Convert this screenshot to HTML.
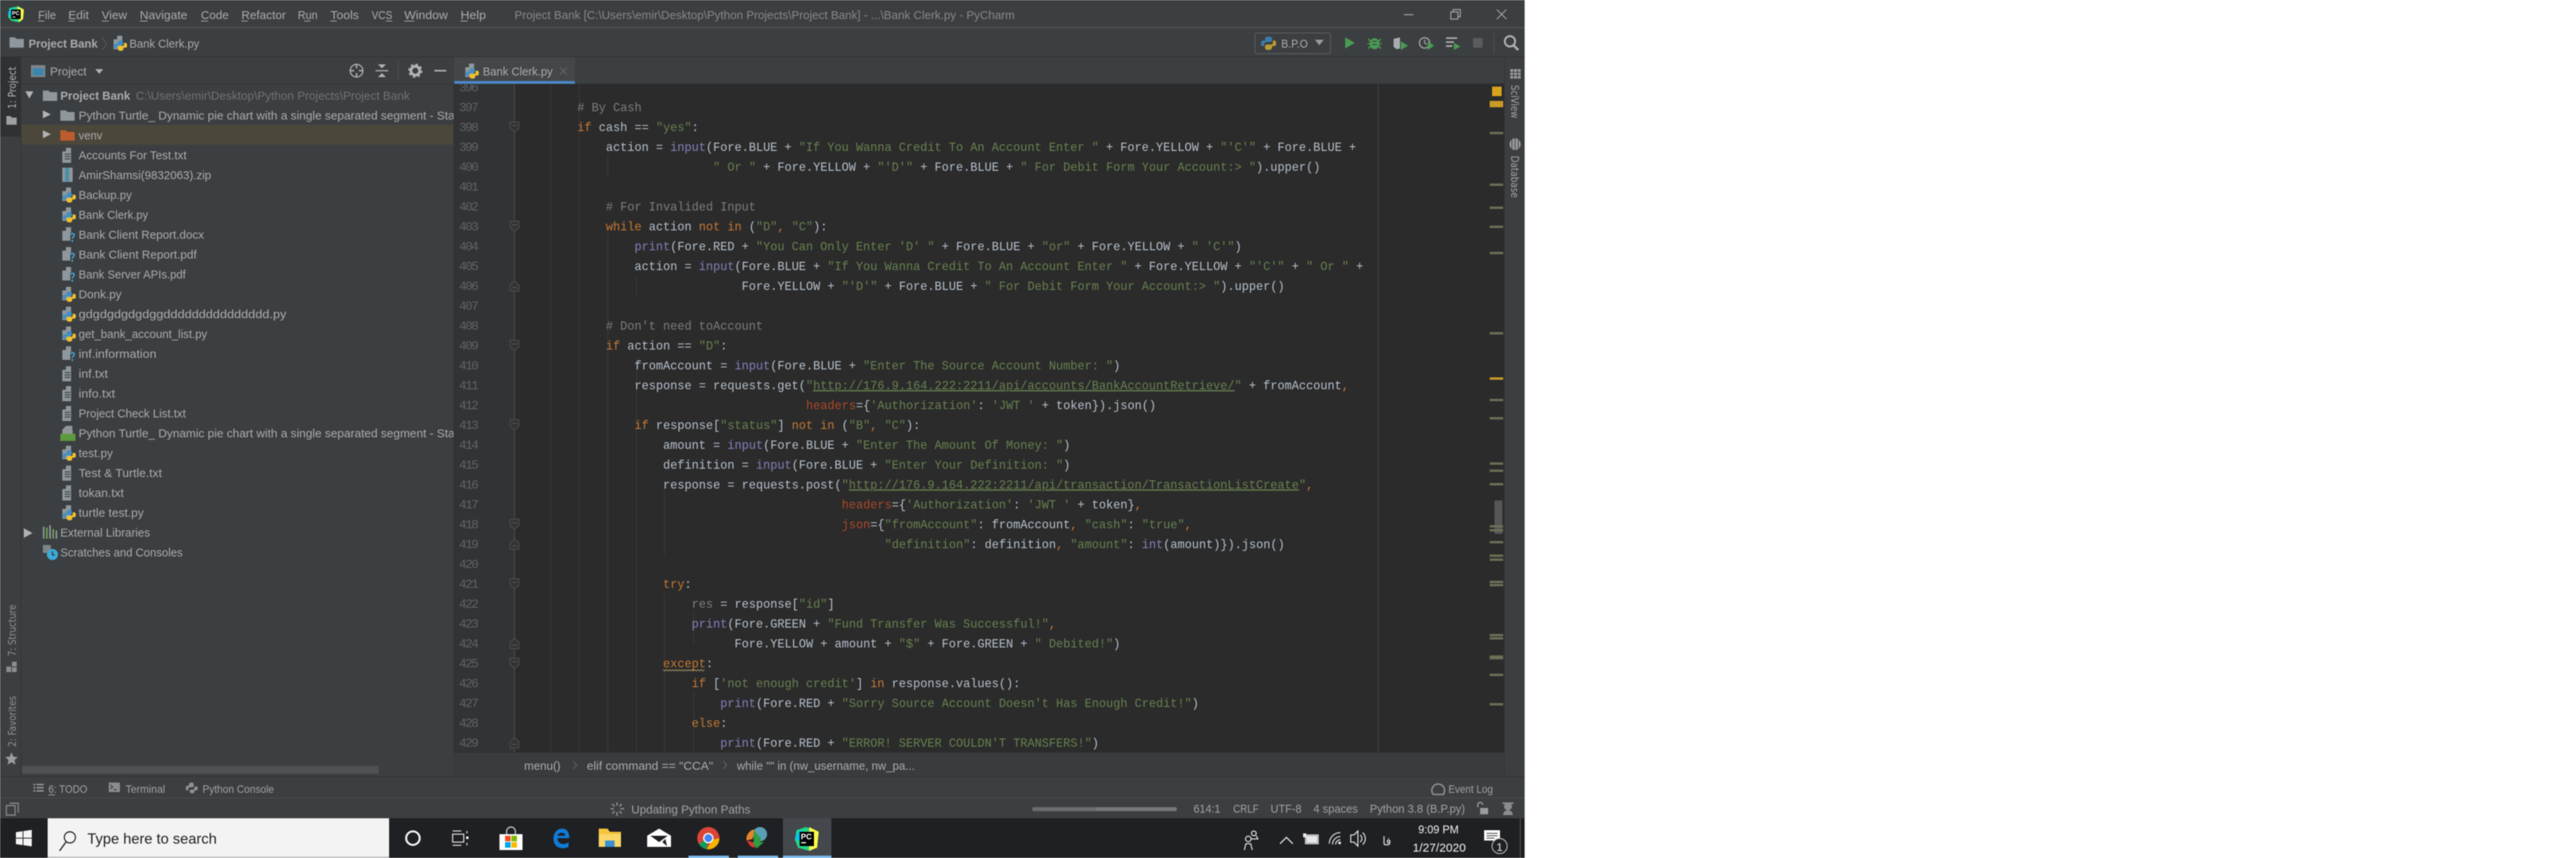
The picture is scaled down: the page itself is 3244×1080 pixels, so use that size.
<!DOCTYPE html>
<html><head><meta charset="utf-8"><title>PyCharm</title>
<style>
html,body{margin:0;padding:0;background:#fff;width:3244px;height:1080px;overflow:hidden}
svg{display:block;filter:blur(.4px)}
text{font-family:"Liberation Sans","Noto Sans CJK SC",sans-serif}
.ui{font-size:15px;fill:#a9abad}
.sm{font-size:14px;fill:#9ea1a3}
.code text,.num text{font-family:"Liberation Mono",monospace;font-size:16px;white-space:pre}
.code{fill:#b4bfcb}.num{fill:#606366}
.k{fill:#c47733}.s{fill:#66804f}.b{fill:#8080bb}.c{fill:#7c7c7c}.h{fill:#aa4926}.u{text-decoration:underline}
</style></head><body>
<svg xmlns="http://www.w3.org/2000/svg" width="3244" height="1080" viewBox="0 0 3244 1080">
<defs>
<clipPath id="tree"><rect x="26" y="105" width="545" height="842"/></clipPath>
<g id="file"><path d="M5 0h6v19H0V5z" fill="#8f979c"/><path d="M0 4.500L4.500 0v4.500z" fill="#3c3f41"/></g>
<g id="py"><path d="M5 0h6v17H0V5z" fill="#8f979c"/><path d="M0 4.500L4.500 0v4.500z" fill="#3c3f41"/>
<path d="M9 6C6.500 6 5.500 7 5.500 8.500V10H2.500C1 10 .5 11.500 .5 13s.5 3 2 3H4v-2c0-1.500 1-2 2-2h4c1 0 2-1 2-2V8.500C12 7 11 6 9 6z" fill="#3f8fc4"/>
<path d="M13 9v2c0 1.500-1 2-2 2H7c-1 0-1.500 1-1.500 2v1.500C5.500 18 7 19 9 19s3.500-1 3.500-2.500V15h3c1 0 1.500-1 1.500-3s-.5-3-2-3z" fill="#efc12d"/></g>
<g id="txt"><use href="#file" /><path d="M3 8h7M3 11h7M3 14h7" stroke="#3c3f41" stroke-width="1.300"/></g>
<g id="unk"><path d="M5 0h6v17H0V5z" fill="#8f979c"/><path d="M0 4.500L4.500 0v4.500z" fill="#3c3f41"/><rect x="10" y="7" width="7" height="12" fill="#3c3f41"/><path d="M10.500 9.500c1-2 4.500-2 4.500.5 0 2-2.500 2-2.500 4.500" fill="none" stroke="#40a0d0" stroke-width="1.800"/><rect x="11.500" y="16" width="2" height="2.500" fill="#40a0d0"/></g>
<g id="fold"><path d="M0 0h7l2 2h9v11H0z" fill="#8f979c"/></g>
<g id="fd"><path d="M-5.500-6.500h11v8l-5.500 5-5.500-5z" fill="#313335" stroke="#4a4d4f" stroke-width="1.200"/><path d="M-3-2h6" stroke="#5a5d5f"/></g>
<g id="fu"><path d="M-5.500 6.500h11v-8l-5.500-5-5.500 5z" fill="#313335" stroke="#4a4d4f" stroke-width="1.200"/><path d="M-3 2h6" stroke="#5a5d5f"/></g>
</defs>

<rect x="0" y="0" width="1920" height="1030" fill="#3c3f41"/>

<!-- editor -->
<rect x="571" y="105" width="77" height="842" fill="#313335"/>
<rect x="648" y="105" width="1246" height="842" fill="#2b2b2b"/>
<path d="M648 105V947" stroke="#4d5052" stroke-width="1"/>
<path d="M1735.500 105V947" stroke="#444648"/>
<g stroke="#3a3b3c" stroke-width="1">
<path d="M693.500 105V947M729.500 105V947M765.500 195V222M765.500 293V947M801.500 348V372M801.500 450V947M836.500 610V700M836.500 747V947M873.500 770V810M873.500 870V947"/>
</g>
<g class="num">
<text x="578" y="115" textLength="25">396</text><text x="578" y="140" textLength="25">397</text><text x="578" y="165" textLength="25">398</text><text x="578" y="190" textLength="25">399</text><text x="578" y="215" textLength="25">400</text><text x="578" y="240" textLength="25">401</text><text x="578" y="265" textLength="25">402</text><text x="578" y="290" textLength="25">403</text><text x="578" y="315" textLength="25">404</text><text x="578" y="340" textLength="25">405</text><text x="578" y="365" textLength="25">406</text><text x="578" y="390" textLength="25">407</text><text x="578" y="415" textLength="25">408</text><text x="578" y="440" textLength="25">409</text><text x="578" y="465" textLength="25">410</text><text x="578" y="490" textLength="25">411</text><text x="578" y="515" textLength="25">412</text><text x="578" y="540" textLength="25">413</text><text x="578" y="565" textLength="25">414</text><text x="578" y="590" textLength="25">415</text><text x="578" y="615" textLength="25">416</text><text x="578" y="640" textLength="25">417</text><text x="578" y="665" textLength="25">418</text><text x="578" y="690" textLength="25">419</text><text x="578" y="715" textLength="25">420</text><text x="578" y="740" textLength="25">421</text><text x="578" y="765" textLength="25">422</text><text x="578" y="790" textLength="25">423</text><text x="578" y="815" textLength="25">424</text><text x="578" y="840" textLength="25">425</text><text x="578" y="865" textLength="25">426</text><text x="578" y="890" textLength="25">427</text><text x="578" y="915" textLength="25">428</text><text x="578" y="940" textLength="25">429</text>
</g>
<use href="#fd" x="648" y="160"/><use href="#fd" x="648" y="285"/><use href="#fu" x="648" y="360"/><use href="#fd" x="648" y="435"/><use href="#fd" x="648" y="535"/><use href="#fd" x="648" y="660"/><use href="#fu" x="648" y="685"/><use href="#fd" x="648" y="735"/><use href="#fu" x="648" y="810"/><use href="#fd" x="648" y="835"/><use href="#fu" x="648" y="935"/>

<g class="code" transform="translate(655 0) scale(.9375 1)">
<text x="76.800" y="140" class="c"># By Cash</text>
<text x="76.800" y="165"><tspan class="k">if</tspan> cash == <tspan class="s">"yes"</tspan>:</text>
<text x="115.200" y="190">action = <tspan class="b">input</tspan>(Fore.BLUE + <tspan class="s">"If You Wanna Credit To An Account Enter "</tspan> + Fore.YELLOW + <tspan class="s">"'C'"</tspan> + Fore.BLUE +</text>
<text x="259.200" y="215"><tspan class="s">" Or "</tspan> + Fore.YELLOW + <tspan class="s">"'D'"</tspan> + Fore.BLUE + <tspan class="s">" For Debit Form Your Account:&gt; "</tspan>).upper()</text>
<text x="115.200" y="265" class="c"># For Invalided Input</text>
<text x="115.200" y="290"><tspan class="k">while</tspan> action <tspan class="k">not in</tspan> (<tspan class="s">"D"</tspan><tspan class="k">,</tspan> <tspan class="s">"C"</tspan>):</text>
<text x="153.600" y="315"><tspan class="b">print</tspan>(Fore.RED + <tspan class="s">"You Can Only Enter 'D' "</tspan> + Fore.BLUE + <tspan class="s">"or"</tspan> + Fore.YELLOW + <tspan class="s">" 'C'"</tspan>)</text>
<text x="153.600" y="340">action = <tspan class="b">input</tspan>(Fore.BLUE + <tspan class="s">"If You Wanna Credit To An Account Enter "</tspan> + Fore.YELLOW + <tspan class="s">"'C'"</tspan> + <tspan class="s">" Or "</tspan> +</text>
<text x="297.600" y="365">Fore.YELLOW + <tspan class="s">"'D'"</tspan> + Fore.BLUE + <tspan class="s">" For Debit Form Your Account:&gt; "</tspan>).upper()</text>
<text x="115.200" y="415" class="c"># Don't need toAccount</text>
<text x="115.200" y="440"><tspan class="k">if</tspan> action == <tspan class="s">"D"</tspan>:</text>
<text x="153.600" y="465">fromAccount = <tspan class="b">input</tspan>(Fore.BLUE + <tspan class="s">"Enter The Source Account Number: "</tspan>)</text>
<text x="153.600" y="490">response = requests.get(<tspan class="s">"</tspan><tspan class="s u">http://176.9.164.222:2211/api/accounts/BankAccountRetrieve/</tspan><tspan class="s">"</tspan> + fromAccount<tspan class="k">,</tspan></text>
<text x="384" y="515"><tspan class="h">headers</tspan>={<tspan class="s">'Authorization'</tspan>: <tspan class="s">'JWT '</tspan> + token}).json()</text>
<text x="153.600" y="540"><tspan class="k">if</tspan> response[<tspan class="s">"status"</tspan>] <tspan class="k">not in</tspan> (<tspan class="s">"B"</tspan><tspan class="k">,</tspan> <tspan class="s">"C"</tspan>):</text>
<text x="192" y="565">amount = <tspan class="b">input</tspan>(Fore.BLUE + <tspan class="s">"Enter The Amount Of Money: "</tspan>)</text>
<text x="192" y="590">definition = <tspan class="b">input</tspan>(Fore.BLUE + <tspan class="s">"Enter Your Definition: "</tspan>)</text>
<text x="192" y="615">response = requests.post(<tspan class="s">"</tspan><tspan class="s u">http://176.9.164.222:2211/api/transaction/TransactionListCreate</tspan><tspan class="s">"</tspan><tspan class="k">,</tspan></text>
<text x="432" y="640"><tspan class="h">headers</tspan>={<tspan class="s">'Authorization'</tspan>: <tspan class="s">'JWT '</tspan> + token}<tspan class="k">,</tspan></text>
<text x="432" y="665"><tspan class="h">json</tspan>={<tspan class="s">"fromAccount"</tspan>: fromAccount<tspan class="k">,</tspan> <tspan class="s">"cash"</tspan>: <tspan class="s">"true"</tspan><tspan class="k">,</tspan></text>
<text x="489.600" y="690"><tspan class="s">"definition"</tspan>: definition<tspan class="k">,</tspan> <tspan class="s">"amount"</tspan>: <tspan class="b">int</tspan>(amount)}).json()</text>
<text x="192" y="740"><tspan class="k">try</tspan>:</text>
<text x="230.400" y="765"><tspan class="c">res</tspan> = response[<tspan class="s">"id"</tspan>]</text>
<text x="230.400" y="790"><tspan class="b">print</tspan>(Fore.GREEN + <tspan class="s">"Fund Transfer Was Successful!"</tspan><tspan class="k">,</tspan></text>
<text x="288" y="815">Fore.YELLOW + amount + <tspan class="s">"$"</tspan> + Fore.GREEN + <tspan class="s">" Debited!"</tspan>)</text>
<text x="192" y="840"><tspan class="k">except</tspan>:</text>
<text x="230.400" y="865"><tspan class="k">if</tspan> [<tspan class="s">'not enough credit'</tspan>] <tspan class="k">in</tspan> response.values():</text>
<text x="268.800" y="890"><tspan class="b">print</tspan>(Fore.RED + <tspan class="s">"Sorry Source Account Doesn't Has Enough Credit!"</tspan>)</text>
<text x="230.400" y="915"><tspan class="k">else</tspan>:</text>
<text x="268.800" y="940"><tspan class="b">print</tspan>(Fore.RED + <tspan class="s">"ERROR! SERVER COULDN'T TRANSFERS!"</tspan>)</text>
</g>
<path d="M835 843l2 1.500 2-1.500 2 1.500 2-1.500 2 1.500 2-1.500 2 1.500 2-1.500 2 1.500 2-1.500 2 1.500 2-1.500 2 1.500 2-1.500 2 1.500 2-1.500 2 1.500 2-1.500 2 1.500 2-1.500 2 1.500 2-1.500 2 1.500 2-1.500 2 1.500 2-1.500" fill="none" stroke="#a89a62" stroke-width="1"/>

<!-- error stripe -->
<g fill="#6b6f55">
<rect x="1879" y="109" width="12" height="12" fill="#d9a31c"/><rect x="1876" y="127" width="17" height="8" fill="#c99a26"/>
<rect x="1876" y="166" width="17" height="3"/><rect x="1876" y="231" width="17" height="3"/><rect x="1876" y="260" width="17" height="3"/><rect x="1876" y="284" width="17" height="3"/><rect x="1876" y="317" width="17" height="3"/><rect x="1876" y="418" width="17" height="3"/><rect x="1876" y="475" width="17" height="3" fill="#c99a26"/><rect x="1876" y="502" width="17" height="3"/><rect x="1876" y="525" width="17" height="3"/><rect x="1876" y="582" width="17" height="3"/><rect x="1876" y="591" width="17" height="3"/><rect x="1876" y="608" width="17" height="3"/>
<rect x="1882" y="630" width="10" height="42" fill="#555657"/>
<rect x="1876" y="661" width="17" height="3"/><rect x="1876" y="666" width="17" height="3"/><rect x="1876" y="681" width="17" height="3"/><rect x="1876" y="698" width="17" height="3"/><rect x="1876" y="703" width="17" height="3"/><rect x="1876" y="731" width="17" height="3"/><rect x="1876" y="735" width="17" height="3"/><rect x="1876" y="798" width="17" height="3"/><rect x="1876" y="802" width="17" height="3"/><rect x="1876" y="825" width="17" height="5"/><rect x="1876" y="848" width="17" height="3"/><rect x="1876" y="885" width="17" height="3"/>
</g>

<!-- top bars -->
<rect x="0" y="0" width="1920" height="105" fill="#3c3f41"/>
<rect x="0" y="34" width="1920" height="1.500" fill="#505355"/>
<rect x="0" y="71" width="1920" height="1" fill="#323436"/>
<rect x="0" y="105" width="1894" height="1" fill="#323436"/>
<rect x="1894" y="71" width="1" height="906" fill="#323436"/>
<rect x="1895" y="105" width="25" height="872" fill="#3c3f41"/>

<!-- logo -->
<g transform="translate(10 8)"><path d="M2 2L13 0l7 4-1 12-5 4-10-2-4-5z" fill="#21d789"/><path d="M12 0l8 4-1 12-5 4z" fill="#fcf84a"/><path d="M0 8l5-6 5 6-5 7z" fill="#07c3f2"/><rect x="4" y="4" width="12" height="12" fill="#000"/><text x="5" y="11" font-size="7" font-weight="bold" fill="#fff" style="font-size:7px">PC</text><rect x="5.500" y="13" width="4" height="1" fill="#fff"/></g>

<!-- menu -->
<g>
<text class="ui" x="48" y="24" textLength="22.500" lengthAdjust="spacingAndGlyphs">File</text>
<text class="ui" x="86" y="24" textLength="26" lengthAdjust="spacingAndGlyphs">Edit</text>
<text class="ui" x="128" y="24" textLength="32" lengthAdjust="spacingAndGlyphs">View</text>
<text class="ui" x="176" y="24" textLength="60" lengthAdjust="spacingAndGlyphs">Navigate</text>
<text class="ui" x="253" y="24" textLength="35" lengthAdjust="spacingAndGlyphs">Code</text>
<text class="ui" x="304" y="24" textLength="56" lengthAdjust="spacingAndGlyphs">Refactor</text>
<text class="ui" x="375" y="24" textLength="25" lengthAdjust="spacingAndGlyphs">Run</text>
<text class="ui" x="416" y="24" textLength="36" lengthAdjust="spacingAndGlyphs">Tools</text>
<text class="ui" x="468" y="24" textLength="26" lengthAdjust="spacingAndGlyphs">VCS</text>
<text class="ui" x="509" y="24" textLength="55" lengthAdjust="spacingAndGlyphs">Window</text>
<text class="ui" x="580" y="24" textLength="32" lengthAdjust="spacingAndGlyphs">Help</text>
</g>
<g fill="#a9abad"><rect x="48" y="26" width="8" height="1"/><rect x="86" y="26" width="8" height="1"/><rect x="128" y="26" width="9" height="1"/><rect x="176" y="26" width="10" height="1"/><rect x="253" y="26" width="9" height="1"/><rect x="304" y="26" width="8" height="1"/><rect x="383" y="26" width="8" height="1"/><rect x="416" y="26" width="8" height="1"/><rect x="486" y="26" width="8" height="1"/><rect x="509" y="26" width="13" height="1"/><rect x="580" y="26" width="9" height="1"/></g>
<text class="ui" style="fill:#85888a" x="648" y="24" textLength="630" lengthAdjust="spacingAndGlyphs">Project Bank [C:\Users\emir\Desktop\Python Projects\Project Bank] - ...\Bank Clerk.py - PyCharm</text>

<!-- window controls -->
<g fill="none" stroke="#a9adb0" stroke-width="1.200">
<path d="M1768 18.500h12"/>
<path d="M1827 15h9v9h-9zM1830 15v-3h9v9h-3"/>
<path d="M1885 12l12 12M1897 12l-12 12"/>
</g>

<!-- nav bar -->
<use href="#fold" x="12" y="47"/>
<text class="ui" x="36" y="60" style="font-weight:bold" textLength="87" lengthAdjust="spacingAndGlyphs">Project Bank</text>
<path d="M129 47l5 8-5 8" fill="none" stroke="#5c5f61" stroke-width="1"/>
<use href="#py" x="143" y="45"/>
<text class="ui" x="163" y="60" textLength="88" lengthAdjust="spacingAndGlyphs">Bank Clerk.py</text>

<!-- run config -->
<rect x="1580.500" y="41.500" width="95" height="26" rx="2" fill="#3c3f41" stroke="#5e6163"/>
<path d="M1598 46c-4 0-5 1.500-5 3v2h-3c-1.500 0-2 2-2 4s1 3 2 3h2v-2c0-2 1-3 3-3h4c2 0 3-1 3-3v-1c0-2-2-3-4-3z" fill="#3d7aa5"/>
<path d="M1603 51v2c0 2-1 3-3 3h-4c-2 0-3 1-3 3v1c0 2 2 3 4 3s5-1 5-3v-2h3c2 0 2-2 2-4s-1-3-2-3z" fill="#b89a33"/>
<text class="ui" x="1613.500" y="60" textLength="33.500" lengthAdjust="spacingAndGlyphs">B.P.O</text>
<path d="M1656 50h11l-5.500 7z" fill="#9a9d9f"/>
<path d="M1694 47l12 7-12 7z" fill="#499c54"/>
<g fill="#499c54"><ellipse cx="1731" cy="55" rx="6" ry="7"/><path d="M1723 49l3 3M1739 49l-3 3M1722 55h4M1740 55h-4M1723 61l3-3M1739 61l-3-3" stroke="#499c54" stroke-width="1.600"/></g>
<path d="M1728 52h6M1728 56h6" stroke="#3c3f41" stroke-width="1.200"/>
<path d="M1755 49l8-2v14l-4 1-4-3z" fill="#a9adb0"/><path d="M1764 52l9 5.500-9 5.500z" fill="#499c54"/>
<circle cx="1794" cy="54" r="6.500" fill="none" stroke="#a9adb0" stroke-width="1.400"/><path d="M1794 50v4l3 2" fill="none" stroke="#a9adb0" stroke-width="1.200"/><path d="M1798 52l8 5.500-8 5.500z" fill="#499c54"/>
<path d="M1821 48h14M1821 53h10M1821 58h8" stroke="#a9adb0" stroke-width="2"/><path d="M1831 54l8 4.500-8 4.500z" fill="#499c54"/>
<rect x="1855" y="48" width="12" height="12" fill="#5a5d5f"/>
<path d="M1881.500 42v25" stroke="#4f5254"/>
<circle cx="1901.500" cy="52" r="6.500" fill="none" stroke="#afb1b3" stroke-width="2.400"/><path d="M1906 57l6 6" stroke="#afb1b3" stroke-width="3"/>

<!-- left strip -->
<rect x="0" y="72" width="26" height="100" fill="#2f3133"/>
<rect x="26" y="72" width="1" height="905" fill="#323436"/>
<text class="ui" style="font-size:13px;fill:#b3b5b7;font-family:'DejaVu Sans','Liberation Sans',sans-serif" transform="translate(20 137) rotate(-90)" textLength="53" lengthAdjust="spacingAndGlyphs">1: Project</text>
<path d="M8 146h5l2 2h6v9H8z" fill="#9aa0a4"/>
<text class="ui" style="font-size:13px;fill:#8f9294;font-family:'DejaVu Sans','Liberation Sans',sans-serif" transform="translate(20 826) rotate(-90)" textLength="65" lengthAdjust="spacingAndGlyphs">7: Structure</text>
<g fill="#8a8d8f"><rect x="8" y="839" width="6" height="7"/><rect x="15" y="833" width="6" height="6"/><rect x="15" y="840" width="6" height="6"/></g>
<text class="ui" style="font-size:13px;fill:#8f9294;font-family:'DejaVu Sans','Liberation Sans',sans-serif" transform="translate(20 940) rotate(-90)" textLength="64" lengthAdjust="spacingAndGlyphs">2: Favorites</text>
<path d="M14.500 947l2.400 5.500 5.600.5-4.300 3.800 1.300 5.700-5-3-5 3 1.300-5.700-4.300-3.800 5.600-.5z" fill="#9a9d9f"/>

<!-- right strip -->
<g fill="#9a9d9f"><rect x="1902" y="87" width="13" height="12"/></g><path d="M1902 91h13M1902 95h13M1906 87v12M1911 87v12" stroke="#3c3f41"/>
<text class="ui" style="font-size:13px;fill:#a4a7a9;font-family:'DejaVu Sans','Liberation Sans',sans-serif" transform="translate(1903 107) rotate(90)" textLength="42" lengthAdjust="spacingAndGlyphs">SciView</text>
<ellipse cx="1908" cy="181.500" rx="7" ry="7.500" fill="#9a9d9f"/><path d="M1904 175v13M1908 174v15M1912 175v13" stroke="#3c3f41"/>
<text class="ui" style="font-size:13px;fill:#a4a7a9;font-family:'DejaVu Sans','Liberation Sans',sans-serif" transform="translate(1903 196) rotate(90)" textLength="53" lengthAdjust="spacingAndGlyphs">Database</text>

<!-- project header -->
<rect x="39" y="82" width="18" height="15" fill="#7d8488"/><rect x="41" y="86" width="14" height="9" fill="#3d86ad"/>
<text class="ui" x="63" y="95" textLength="46" lengthAdjust="spacingAndGlyphs">Project</text>
<path d="M120 87h10l-5 6z" fill="#afb1b3"/>
<circle cx="449" cy="89" r="8" fill="none" stroke="#afb1b3" stroke-width="1.500"/><path d="M449 81v5M449 92v5M441 89h5M452 89h5" stroke="#afb1b3" stroke-width="1.800"/>
<path d="M473 89h16" stroke="#afb1b3" stroke-width="1.500"/><path d="M481 86l-5-5h10zM481 92l-5 5h10z" fill="#afb1b3"/>
<path d="M501.500 77v24" stroke="#4f5254"/>
<circle cx="523" cy="89" r="5.500" fill="none" stroke="#afb1b3" stroke-width="3.500"/><circle cx="523" cy="89" r="8" fill="none" stroke="#afb1b3" stroke-width="2" stroke-dasharray="3 3.300"/>
<path d="M547 89h15" stroke="#afb1b3" stroke-width="2"/>

<!-- tab -->
<rect x="572" y="72" width="152" height="33" fill="#44474a"/>
<rect x="572" y="102" width="152" height="3.500" fill="#4a88c7"/>
<use href="#py" x="586" y="80"/>
<text class="ui" x="608" y="95" textLength="88" lengthAdjust="spacingAndGlyphs">Bank Clerk.py</text>
<path d="M705 85l9 9M714 85l-9 9" stroke="#66696b" stroke-width="1.200"/>

<!-- tree -->
<rect x="27" y="157" width="544" height="25" fill="#4b473a"/>
<g clip-path="url(#tree)">
<path d="M32 115h10l-5 9z" fill="#b0b3b5"/><use href="#fold" x="54" y="114"/>
<text class="ui" x="76" y="125.700" style="font-weight:bold" textLength="88" lengthAdjust="spacingAndGlyphs">Project Bank</text>
<text class="ui" style="fill:#6f7274" x="171" y="125.700" textLength="345" lengthAdjust="spacingAndGlyphs">C:\Users\emir\Desktop\Python Projects\Project Bank</text>
<path d="M54 139l10 5-10 5z" fill="#b0b3b5"/><use href="#fold" x="76" y="139"/>
<text class="ui" x="99" y="150.700" textLength="481" lengthAdjust="spacingAndGlyphs">Python Turtle_ Dynamic pie chart with a single separated segment - Stac</text>
<path d="M54 164l10 5-10 5z" fill="#b0b3b5"/><path d="M76 164h7l2 2h9v11H76z" fill="#bd5c2d"/>
<text class="ui" x="99" y="175.700" textLength="30" lengthAdjust="spacingAndGlyphs">venv</text>
<use href="#txt" x="78.500" y="186"/><text class="ui" x="99" y="200.700" textLength="136" lengthAdjust="spacingAndGlyphs">Accounts For Test.txt</text>
<rect x="78.500" y="211" width="13" height="18" fill="#8f979c"/><rect x="82" y="211" width="5" height="18" fill="#4b8fa8"/>
<text class="ui" x="99" y="225.700" textLength="167" lengthAdjust="spacingAndGlyphs">AmirShamsi(9832063).zip</text>
<use href="#py" x="78.500" y="236"/><text class="ui" x="99" y="250.700" textLength="67" lengthAdjust="spacingAndGlyphs">Backup.py</text>
<use href="#py" x="78.500" y="261"/><text class="ui" x="99" y="275.700" textLength="87.500" lengthAdjust="spacingAndGlyphs">Bank Clerk.py</text>
<use href="#unk" x="78.500" y="286"/><text class="ui" x="99" y="300.700" textLength="158" lengthAdjust="spacingAndGlyphs">Bank Client Report.docx</text>
<use href="#unk" x="78.500" y="311"/><text class="ui" x="99" y="325.700" textLength="148.700" lengthAdjust="spacingAndGlyphs">Bank Client Report.pdf</text>
<use href="#unk" x="78.500" y="336"/><text class="ui" x="99" y="350.700" textLength="135" lengthAdjust="spacingAndGlyphs">Bank Server APIs.pdf</text>
<use href="#py" x="78.500" y="361"/><text class="ui" x="99" y="375.700" textLength="54" lengthAdjust="spacingAndGlyphs">Donk.py</text>
<use href="#py" x="78.500" y="386"/><text class="ui" x="99" y="400.700" textLength="261.600" lengthAdjust="spacingAndGlyphs">gdgdgdgdgdggddddddddddddddd.py</text>
<use href="#py" x="78.500" y="411"/><text class="ui" x="99" y="425.700" textLength="162" lengthAdjust="spacingAndGlyphs">get_bank_account_list.py</text>
<use href="#unk" x="78.500" y="436"/><text class="ui" x="99" y="450.700" textLength="98" lengthAdjust="spacingAndGlyphs">inf.information</text>
<use href="#txt" x="78.500" y="461"/><text class="ui" x="99" y="475.700" textLength="37" lengthAdjust="spacingAndGlyphs">inf.txt</text>
<use href="#txt" x="78.500" y="486"/><text class="ui" x="99" y="500.700" textLength="46" lengthAdjust="spacingAndGlyphs">info.txt</text>
<use href="#txt" x="78.500" y="511"/><text class="ui" x="99" y="525.700" textLength="135" lengthAdjust="spacingAndGlyphs">Project Check List.txt</text>
<path d="M83 536h8v19H83z" fill="#8f979c"/><path d="M78.500 541l4.500-5v5z" fill="#8f979c"/><rect x="78.500" y="541" width="13" height="9" fill="#8f979c"/><rect x="76" y="546" width="19" height="9" fill="#5e9a3f"/>
<text class="ui" x="99" y="550.700" textLength="481" lengthAdjust="spacingAndGlyphs">Python Turtle_ Dynamic pie chart with a single separated segment - Stac</text>
<use href="#py" x="78.500" y="561"/><text class="ui" x="99" y="575.700" textLength="43" lengthAdjust="spacingAndGlyphs">test.py</text>
<use href="#txt" x="78.500" y="586"/><text class="ui" x="99" y="600.700" textLength="105" lengthAdjust="spacingAndGlyphs">Test &amp; Turtle.txt</text>
<use href="#txt" x="78.500" y="611"/><text class="ui" x="99" y="625.700" textLength="57" lengthAdjust="spacingAndGlyphs">tokan.txt</text>
<use href="#py" x="78.500" y="636"/><text class="ui" x="99" y="650.700" textLength="82" lengthAdjust="spacingAndGlyphs">turtle test.py</text>
<path d="M30 665l11 6-11 6z" fill="#b0b3b5"/>
<g stroke-width="2"><path d="M55 663v15" stroke="#8f979c"/><path d="M59 664v14" stroke="#6fa64b"/><path d="M63 661v17" stroke="#8f979c"/><path d="M67 666v12" stroke="#6fa64b"/><path d="M71 668v10" stroke="#8f979c"/></g>
<text class="ui" x="76" y="675.700" textLength="113" lengthAdjust="spacingAndGlyphs">External Libraries</text>
<path d="M54 686h10v10H54z" fill="#7d8488"/><circle cx="66" cy="698" r="7" fill="#3fa9d6"/><path d="M66 694v4.500h3" fill="none" stroke="#1f2a30" stroke-width="1.200"/>
<text class="ui" x="76" y="700.700" textLength="154" lengthAdjust="spacingAndGlyphs">Scratches and Consoles</text>
</g>
<rect x="28" y="964" width="449" height="10" fill="#4f5153"/>

<!-- breadcrumb -->
<rect x="571" y="947" width="1323" height="30" fill="#393b3d"/>
<rect x="571" y="947" width="1323" height="1" fill="#323436"/>
<g><text class="ui" x="660" y="969" textLength="46" lengthAdjust="spacingAndGlyphs">menu()</text>
<path d="M722 958l4 5-4 5M911 958l4 5-4 5" fill="none" stroke="#6b6e70"/>
<text class="ui" x="739" y="969" textLength="159" lengthAdjust="spacingAndGlyphs">elif command == "CCA"</text>
<text class="ui" x="928" y="969" textLength="224" lengthAdjust="spacingAndGlyphs">while "" in (nw_username, nw_pa...</text></g>

<!-- tool bar -->
<rect x="0" y="977" width="1920" height="1" fill="#323436"/>
<rect x="0" y="1004" width="1920" height="1" fill="#4a4d4f"/>
<path d="M46 987.500h9M46 991.500h9M46 995.500h9" stroke="#8f9294" stroke-width="2"/><path d="M42 987.500h2.500M42 991.500h2.500M42 995.500h2.500" stroke="#8f9294" stroke-width="2"/>
<text class="sm" x="61" y="998" textLength="49" lengthAdjust="spacingAndGlyphs">6: TODO</text><rect x="61" y="1000" width="8" height="1" fill="#a4a7a9"/>
<rect x="137" y="985" width="14" height="12" fill="#8a8d8f"/><path d="M139 988l3 2.500-3 2.500M143 994h4" fill="none" stroke="#3c3f41" stroke-width="1.200"/>
<text class="sm" x="158" y="998" textLength="50" lengthAdjust="spacingAndGlyphs">Terminal</text>
<path d="M242 985c-3 0-4 1-4 2.500V989h-2c-1.500 0-2 1.500-2 3s.5 3 2 3h1v-2c0-1 1-2 2-2h3c1 0 2-1 2-2v-1.500c0-1.500-1-2.500-2-2.500zM245 990v1c0 2-1 3-3 3h-2c-1 0-1 1-1 2v.5c0 1 1 2 3 2s3-1 3-2V995h2c1.500 0 2-1.500 2-3s-1-2-2-2z" fill="#8f9294"/>
<text class="sm" x="255" y="998" textLength="90" lengthAdjust="spacingAndGlyphs">Python Console</text>
<path d="M1805 1000a8 8 0 1 1 13-1v1z" fill="none" stroke="#8f9294" stroke-width="1.800"/>
<text class="sm" x="1824" y="998" textLength="56" lengthAdjust="spacingAndGlyphs">Event Log</text>

<!-- status -->
<path d="M12 1011h11v12M8 1014h11v12H8z" fill="none" stroke="#8a8d8f" stroke-width="1.400"/>
<g stroke="#8a8d8f" stroke-width="1.800"><path d="M777 1010v4M777 1022v5M769 1018h4M781 1018h5M771 1012l3 3M780 1021l3 3M771 1024l3-3M780 1015l3-3"/></g>
<text class="sm" x="795" y="1024" style="font-size:15px" textLength="150" lengthAdjust="spacingAndGlyphs">Updating Python Paths</text>
<rect x="1300" y="1016" width="182" height="5" rx="2" fill="#76797b"/><rect x="1300" y="1016" width="80" height="5" rx="2" fill="#6a6d6f"/>
<text class="sm" x="1503" y="1023" style="font-size:15px" textLength="34" lengthAdjust="spacingAndGlyphs">614:1</text>
<text class="sm" x="1553" y="1023" style="font-size:15px" textLength="32" lengthAdjust="spacingAndGlyphs">CRLF</text>
<text class="sm" x="1600" y="1023" style="font-size:15px" textLength="39" lengthAdjust="spacingAndGlyphs">UTF-8</text>
<text class="sm" x="1654" y="1023" style="font-size:15px" textLength="56" lengthAdjust="spacingAndGlyphs">4 spaces</text>
<text class="sm" x="1725" y="1023" style="font-size:15px" textLength="120" lengthAdjust="spacingAndGlyphs">Python 3.8 (B.P.py)</text>
<path d="M1861 1016v-3a3 3 0 0 1 6 0" fill="none" stroke="#9a9d9f" stroke-width="1.600"/><rect x="1864" y="1017" width="10" height="8" fill="#9a9d9f"/>
<circle cx="1899" cy="1015" r="5" fill="#8a8d8f"/><rect x="1892" y="1010" width="14" height="2" fill="#8a8d8f"/><path d="M1893 1026c0-5 3-6 6-6s6 1 6 6z" fill="#8a8d8f"/>

<!-- taskbar -->
<rect x="0" y="1030" width="1920" height="50" fill="#1f2023"/>
<g fill="#f4f4f4"><path d="M20 1047.500l8.500-1.200V1054.500H20zM29.500 1046.100L40 1044.600V1054.500H29.500zM20 1055.500h8.500v8.200L20 1062.500zM29.500 1055.500H40V1065.400l-10.500-1.500z"/></g>
<rect x="60" y="1030" width="430" height="50" fill="#f3f3f3"/><rect x="60" y="1078.500" width="430" height="1.500" fill="#b0b0b0"/>
<circle cx="88" cy="1054" r="7" fill="none" stroke="#222" stroke-width="1.400"/><path d="M83 1060l-8 11" stroke="#222" stroke-width="1.500"/>
<text x="110" y="1062" style="font-size:18px;fill:#222" textLength="163" lengthAdjust="spacingAndGlyphs">Type here to search</text>
<circle cx="520" cy="1055" r="8.500" fill="none" stroke="#f4f4f4" stroke-width="2.600"/>
<g fill="none" stroke="#e8e8e8" stroke-width="1.300"><path d="M570 1046h11M570 1064h11M570 1050h14v10h-14zM588 1046v3M588 1061v3"/></g><rect x="587" y="1053" width="3" height="3" fill="#fff"/>
<path d="M629 1050h29v20h-29z" fill="#fff"/><path d="M638 1050v-3.500a5.500 5.500 0 0 1 11 0V1050" fill="none" stroke="#c8c8c8" stroke-width="1.500"/>
<rect x="636" y="1052" width="7" height="7" fill="#f25022"/><rect x="644" y="1052" width="7" height="7" fill="#7fba00"/><rect x="636" y="1060" width="7" height="7" fill="#00a4ef"/><rect x="644" y="1060" width="7" height="7" fill="#ffb900"/>
<path d="M697 1056c0-8 5-13 11-13 6 0 9 5 9 12h-15c0 7 8 10 14 5v6c-8 4-19 1-19-10zM702 1052h10c0-5-9-5-10 0z" fill="#0f7bd8"/>
<path d="M754 1043h11l3 4h14v19h-28z" fill="#f5c33b"/><path d="M754 1050h28v16h-28z" fill="#f9d667"/><rect x="762" y="1058" width="12" height="8" fill="#3a90d0"/>
<path d="M815 1052l15-9 15 9v14h-30z" fill="#fff"/><path d="M819 1052h22l-11 8zM838 1056l-4 4 6 5" fill="#1f2023"/>
<circle cx="892" cy="1055" r="14" fill="#db4437"/><path d="M892 1055l-12 7a14 14 0 0 0 10 7z" fill="#0f9d58"/><path d="M906 1055a14 14 0 0 1-16 14l7-12z" fill="#f4b400"/><circle cx="892" cy="1055" r="6.500" fill="#fff"/><circle cx="892" cy="1055" r="5" fill="#4285f4"/>
<circle cx="957" cy="1050" r="9" fill="#5a9fb8"/><path d="M940 1058a13 13 0 0 1 9-14l3 4a9 9 0 0 0-4 8z" fill="#e8842a"/><path d="M949 1045l9 10-1 5 5 0-9 8-7-8 3 0z" fill="#2f9e3f"/><path d="M941 1058c1 5 5 9 10 9l-3-7z" fill="#d33"/>
<rect x="986" y="1030" width="61" height="50" fill="#44474b"/>
<g transform="translate(1001 1041)"><path d="M2 4L14 0l16 6-2 20-10 4L4 26 0 16z" fill="#21d789"/><path d="M18 0l12 6-2 20-10 4z" fill="#fcf84a"/><path d="M0 14L6 4l12 4-6 14z" fill="#07c3f2"/><rect x="6" y="6" width="18" height="18" fill="#000"/><text x="7.500" y="15.500" style="font-size:10px;font-weight:bold;fill:#fff">PC</text><rect x="8" y="19" width="6" height="1.500" fill="#fff"/></g>
<rect x="867" y="1077" width="51" height="3" fill="#76b9ed"/><rect x="929" y="1077" width="51" height="3" fill="#76b9ed"/><rect x="986" y="1077" width="61" height="3" fill="#76b9ed"/>
<!-- tray -->
<g fill="none" stroke="#e8e8e8" stroke-width="1.300">
<circle cx="1572" cy="1056" r="3.500"/><path d="M1567 1070l2-8h6l2 8"/><circle cx="1579" cy="1049" r="3"/><path d="M1576 1056h8l-2-4"/>
<path d="M1612 1062l8-8 8 8" stroke-width="1.500"/>
<rect x="1644" y="1051" width="16" height="11"/>
<path d="M1674 1062a14 14 0 0 1 14-14M1678 1063a10 10 0 0 1 10-10M1682 1063a6 6 0 0 1 6-6"/>
<path d="M1701 1051h4l5-5v19l-5-5h-4zM1713 1051a6 6 0 0 1 0 9M1716 1048a10 10 0 0 1 0 15"/>
</g>
<rect x="1645" y="1052" width="14" height="9" fill="#e8e8e8"/><rect x="1641" y="1049" width="4" height="5" fill="#e8e8e8"/><circle cx="1687" cy="1061" r="1.800" fill="#e8e8e8"/>
<text x="1741" y="1064" style="font-size:15px;fill:#e4e4e4;font-family:'DejaVu Sans','Liberation Sans',sans-serif" textLength="11" lengthAdjust="spacingAndGlyphs">فا</text>
<text x="1786" y="1049" style="font-size:15px;fill:#f0f0f0" textLength="51" lengthAdjust="spacingAndGlyphs">9:09 PM</text>
<text x="1779" y="1072" style="font-size:15px;fill:#f0f0f0" textLength="67" lengthAdjust="spacingAndGlyphs">1/27/2020</text>
<path d="M1869 1045h20v13h-4v4l-5-4h-11z" fill="#fff"/><path d="M1872 1049h14M1872 1052h14M1872 1055h10" stroke="#333" stroke-width="1"/>
<circle cx="1888.500" cy="1065" r="9.500" fill="#1f2023" stroke="#bbb" stroke-width="1.200"/>
<text x="1884.500" y="1071" style="font-size:14px;fill:#eee">1</text>
<path d="M1914.500 1030v50" stroke="#55585b"/>
</svg>
</body></html>
